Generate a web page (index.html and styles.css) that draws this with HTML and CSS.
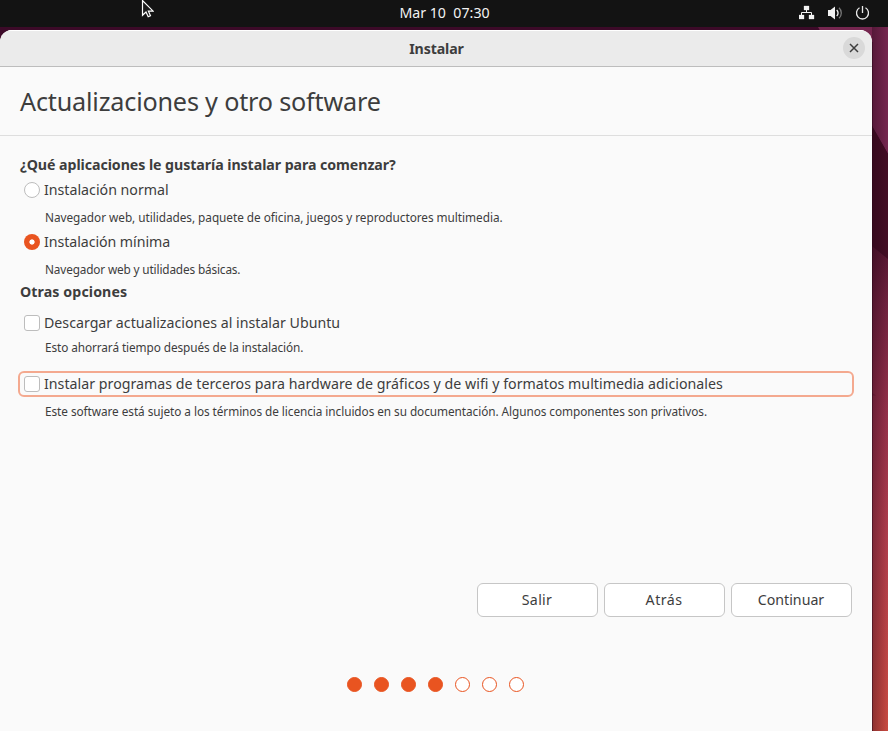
FILE: index.html
```
<!DOCTYPE html>
<html lang="es">
<head>
<meta charset="utf-8">
<title>Instalar</title>
<link rel="stylesheet" href="styles.css">
</head>
<body>
<svg class="wallpaper" width="888" height="731" viewBox="0 0 888 731" aria-hidden="true">
  <defs>
    <linearGradient id="warm" x1="0" y1="246" x2="0" y2="731" gradientUnits="userSpaceOnUse">
      <stop offset="0" stop-color="#541630"/><stop offset=".12" stop-color="#71223f"/><stop offset=".35" stop-color="#96304a"/><stop offset=".6" stop-color="#b03d4c"/><stop offset="1" stop-color="#c94a40"/>
    </linearGradient>
    <linearGradient id="shade" x1="872" x2="888" y1="0" y2="0" gradientUnits="userSpaceOnUse">
      <stop offset="0" stop-color="#1c0010" stop-opacity=".35"/><stop offset="1" stop-color="#1c0010" stop-opacity="0"/>
    </linearGradient>
  </defs>
  <path d="M0 0h888v731H0z" fill="#3c0a28"/>
  <path d="M818 27h70v127l-16-28z" fill="#75264f"/>
  <path d="M872 126l16 28v105l-16-13z" fill="#430d24"/>
  <path d="M872 246l16 13v472h-16z" fill="url(#warm)"/>
  <path d="M872 27h16v704h-16z" fill="url(#shade)"/>
  <path d="M872 393l4 2.500h-4z" fill="#5e1830"/>
  <path d="M872 42h1v689h-1z" fill="#2a0618" fill-opacity=".5"/>
</svg>
<header class="topbar">
  <span class="clock">Mar 10&nbsp; 07:30</span>
  <div class="tray">
    <svg width="16" height="16" viewBox="0 0 16 16"><path d="M5 1h5v4H5zM0 10h5v4H0zM10 10h5v4h-5z" fill="#f2f2f2" stroke="#f2f2f2" stroke-width=".3" stroke-linejoin="round"/><path d="M7.500 5v2.500M2.500 10V7.500h10V10" fill="none" stroke="#f2f2f2"/></svg>
    <svg width="16" height="16" viewBox="0 0 16 16"><path d="M1 5h2.500L8 1.500v13L3.500 11H1z" fill="#f2f2f2"/><path d="M9.700 5a4 4 0 0 1 0 6" fill="none" stroke="#f2f2f2" stroke-width="1.300"/><path d="M12 2.800a7 7 0 0 1 0 10.400" fill="none" stroke="#777" stroke-width="1.300"/></svg>
    <svg width="16" height="16" viewBox="0 0 16 16"><path d="M4.500 2.800a6 6 0 1 0 6 0M7.500 1v7" fill="none" stroke="#e8e8e8" stroke-width="1.300"/></svg>
  </div>
</header>
<svg class="pointer" width="14" height="20" viewBox="0 0 14 20"><path d="M2.500.5v14.800l3.500-3.300 2.200 4.800 2.300-1-2.100-4.600h4.800z" fill="#1c1c1c" stroke="#fff" stroke-width="1.200"/></svg>
<main class="window">
  <div class="titlebar">
    <span class="title">Instalar</span>
    <button class="close" aria-label="Cerrar"><svg width="10" height="10" viewBox="0 0 10 10"><path d="M1 1l8 8M9 1L1 9" stroke="#3d3d3d" stroke-width="1.500"/></svg></button>
  </div>
  <h1 class="heading">Actualizaciones y otro software</h1>
  <section class="content">
    <h2 class="question">¿Qué aplicaciones le gustaría instalar para comenzar?</h2>
    <label class="option first"><i class="radio"></i><span>Instalación normal</span></label>
    <p class="hint normal">Navegador web, utilidades, paquete de oficina, juegos y reproductores multimedia.</p>
    <label class="option second"><i class="radio on"></i><span>Instalación mínima</span></label>
    <p class="hint minimal">Navegador web y utilidades básicas.</p>
    <h2 class="other">Otras opciones</h2>
    <label class="option check-row"><i class="check"></i><span>Descargar actualizaciones al instalar Ubuntu</span></label>
    <p class="hint save">Esto ahorrará tiempo después de la instalación.</p>
    <label class="option focused"><i class="check"></i><span>Instalar programas de terceros para hardware de gráficos y de wifi y formatos multimedia adicionales</span></label>
    <p class="hint license">Este software está sujeto a los términos de licencia incluidos en su documentación. Algunos componentes son privativos.</p>
  </section>
  <div class="actions"><button class="quit">Salir</button><button class="back">Atrás</button><button>Continuar</button></div>
  <div class="dots"><i class="full"></i><i class="full"></i><i class="full"></i><i class="full"></i><i></i><i></i><i></i></div>
</main>
</body>
</html>
```
FILE: styles.css
```
* { box-sizing: border-box; }
body {
  margin: 0;
  width: 888px;
  height: 731px;
  overflow: hidden;
  color: #3d3d3d;
  font: 14.2px/20px "Noto Sans", sans-serif;
  background: #3c0a28;
}
.wallpaper { position: absolute; inset: 0; z-index: -1; }
.topbar {
  display: grid;
  grid-template-columns: 1fr auto;
  height: 27px;
  background: #131313;
  color: #f2f2f2;
}
.clock { grid-area: 1 / 1 / 2 / 3; justify-self: center; padding-left: 1px; line-height: 25px; }
.tray { grid-area: 1 / 2; display: flex; gap: 12px; padding: 5px 17px 0 0; }
.pointer { position: absolute; left: 140px; top: 0; }
.window {
  width: 872px;
  height: 701px;
  margin-top: 3px;
  display: flex;
  flex-direction: column;
  overflow: hidden;
  background: #fafafa;
  border-radius: 12px 12px 0 0;
}
.titlebar {
  height: 37px;
  display: grid;
  grid-template-columns: 1fr auto;
  align-items: center;
  padding-bottom: 1px;
  background: #ebebeb;
  border-top: 1px solid #fff;
  border-bottom: 1px solid #bdbdbd;
}
.title { grid-area: 1 / 1 / 2 / 3; justify-self: center; padding: 2px 0 0 1px; font-weight: 700; letter-spacing: -.12px; }
.close {
  grid-area: 1 / 2;
  display: grid;
  place-items: center;
  width: 22px;
  height: 22px;
  margin-right: 7px;
  padding: 0;
  border: 0;
  border-radius: 50%;
  background: #d9d9d9;
}
.heading {
  height: 69px;
  margin: 0;
  padding-left: 20px;
  border-bottom: 1px solid #dedede;
  font-size: 25.2px;
  font-weight: 400;
  line-height: 69px;
  letter-spacing: -.19px;
}
.content { height: 417px; padding: 19px 18px 0; }
.content h2 { margin: 0 0 0 2px; font-size: 14.2px; line-height: 20px; }
.content .question { letter-spacing: -.065px; }
.content .other { height: 18px; letter-spacing: .1px; }
.option { display: flex; align-items: center; gap: 4px; height: 26px; padding-left: 6px; white-space: nowrap; }
.option span { padding-bottom: 1px; }
.option.first { margin-top: 2px; }
.second { letter-spacing: -.06px; }
.radio, .check { width: 16px; height: 16px; flex: none; border: 1px solid #bdbdbd; background: #fff; }
.radio { border-radius: 50%; }
.radio.on { border: 0; background: radial-gradient(circle, #fff 2.200px, #e95420 3px); }
.check { border-radius: 3px; }
.hint { height: 26px; margin: 0 0 0 27px; font-size: 11.8px; line-height: 28px; white-space: nowrap; }
.normal { letter-spacing: -.04px; }
.minimal { height: 27px; letter-spacing: -.15px; }
.check-row { margin-top: 10px; }
.save { height: 35px; line-height: 23px; letter-spacing: -.09px; }
.focused { width: 836px; padding-left: 4px; border: 2px solid #f4a98f; border-radius: 6px; letter-spacing: .02px; }
.license { letter-spacing: -.06px; }
.actions { display: flex; justify-content: flex-end; gap: 6px; padding: 30px 20px 0 0; height: 94px; }
.actions button {
  width: 121px;
  height: 34px;
  padding: 0 1px 0 0;
  border: 1px solid #c6c6c6;
  border-radius: 6px;
  background: #fff;
  color: inherit;
  font: inherit;
}
.actions .quit { letter-spacing: .3px; }
.actions .back { letter-spacing: .45px; }
.dots { display: flex; justify-content: center; gap: 12px; padding: 30px 1px 0 0; }
.dots i { width: 15px; height: 15px; border: 1px solid #e95420; border-radius: 50%; background: #fff; }
.dots .full { background: #e95420; }
```
